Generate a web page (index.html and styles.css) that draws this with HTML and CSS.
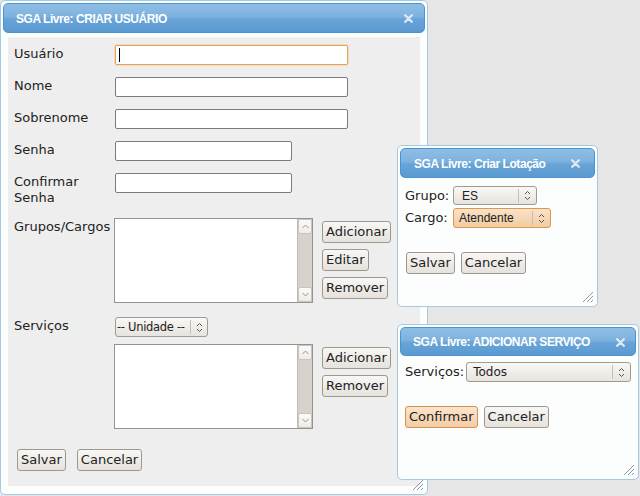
FILE: index.html
```html
<!DOCTYPE html>
<html lang="pt-BR">
<head>
<meta charset="utf-8">
<title>SGA Livre</title>
<link rel="stylesheet" href="styles.css">
</head>
<body>

<div class="dialog dlg-main">
  <div class="titlebar">
    <span class="title">SGA Livre: CRIAR USUÁRIO</span>
    <svg class="close" width="9" height="9" viewBox="0 0 9 9"><path d="M1.2 1.2L7.8 7.8M7.8 1.2L1.2 7.8"/></svg>
  </div>
  <div class="content">
    <div class="form">
      <div class="row"><span class="lbl">Usuário</span><div class="field wide focus"><span class="caret"></span></div></div>
      <div class="row"><span class="lbl">Nome</span><div class="field wide"></div></div>
      <div class="row"><span class="lbl">Sobrenome</span><div class="field wide"></div></div>
      <div class="row"><span class="lbl">Senha</span><div class="field short"></div></div>
      <div class="row"><span class="lbl">Confirmar Senha</span><div class="field short"></div></div>
      <div class="row">
        <span class="lbl">Grupos/Cargos</span>
        <div class="listbox">
          <div class="scrollbar">
            <div class="sb-btn"><svg width="7" height="5" viewBox="0 0 7 5"><path d="M0.5 4L3.5 1L6.5 4"/></svg></div>
            <div class="sb-track"></div>
            <div class="sb-btn"><svg width="7" height="5" viewBox="0 0 7 5"><path d="M0.5 1L3.5 4L6.5 1"/></svg></div>
          </div>
        </div>
        <div class="btncol">
          <button class="btn">Adicionar</button>
          <button class="btn">Editar</button>
          <button class="btn">Remover</button>
        </div>
      </div>
      <div class="row row-serv">
        <span class="lbl">Serviços</span>
        <div class="combo combo-unidade">
          <span class="val">-- Unidade --</span>
          <span class="arr"><svg width="7" height="11" viewBox="0 0 7 11"><path d="M1 4L3.5 1.5L6 4M1 7L3.5 9.5L6 7"/></svg></span>
        </div>
      </div>
      <div class="row row-list2">
        <span class="lbl"></span>
        <div class="listbox">
          <div class="scrollbar">
            <div class="sb-btn"><svg width="7" height="5" viewBox="0 0 7 5"><path d="M0.5 4L3.5 1L6.5 4"/></svg></div>
            <div class="sb-track"></div>
            <div class="sb-btn"><svg width="7" height="5" viewBox="0 0 7 5"><path d="M0.5 1L3.5 4L6.5 1"/></svg></div>
          </div>
        </div>
        <div class="btncol">
          <button class="btn">Adicionar</button>
          <button class="btn">Remover</button>
        </div>
      </div>
      <div class="actions">
        <button class="btn">Salvar</button>
        <button class="btn">Cancelar</button>
      </div>
    </div>
  </div>
  <svg class="grip" width="12" height="12" viewBox="0 0 12 12"><path d="M11 1L1 11M11 5L5 11M11 9L9 11"/></svg>
</div>

<div class="dialog dlg-lot">
  <div class="titlebar">
    <span class="title">SGA Livre: Criar Lotação</span>
    <svg class="close" width="9" height="9" viewBox="0 0 9 9"><path d="M1.2 1.2L7.8 7.8M7.8 1.2L1.2 7.8"/></svg>
  </div>
  <div class="content small">
    <div class="srow"><span class="slbl">Grupo:</span>
      <div class="combo combo-es"><span class="val arial">ES</span><span class="arr"><svg width="7" height="11" viewBox="0 0 7 11"><path d="M1 4L3.5 1.5L6 4M1 7L3.5 9.5L6 7"/></svg></span></div>
    </div>
    <div class="srow"><span class="slbl">Cargo:</span>
      <div class="combo combo-cargo focus"><span class="val arial">Atendente</span><span class="arr"><svg width="7" height="11" viewBox="0 0 7 11"><path d="M1 4L3.5 1.5L6 4M1 7L3.5 9.5L6 7"/></svg></span></div>
    </div>
    <div class="sactions">
      <button class="btn">Salvar</button>
      <button class="btn">Cancelar</button>
    </div>
  </div>
  <svg class="grip" width="12" height="12" viewBox="0 0 12 12"><path d="M11 1L1 11M11 5L5 11M11 9L9 11"/></svg>
</div>

<div class="dialog dlg-serv">
  <div class="titlebar">
    <span class="title">SGA Livre: ADICIONAR SERVIÇO</span>
    <svg class="close" width="9" height="9" viewBox="0 0 9 9"><path d="M1.2 1.2L7.8 7.8M7.8 1.2L1.2 7.8"/></svg>
  </div>
  <div class="content small">
    <div class="srow"><span class="slbl auto">Serviços:</span>
      <div class="combo combo-todos"><span class="val">Todos</span><span class="arr"><svg width="7" height="11" viewBox="0 0 7 11"><path d="M1 4L3.5 1.5L6 4M1 7L3.5 9.5L6 7"/></svg></span></div>
    </div>
    <div class="sactions">
      <button class="btn focus">Confirmar</button>
      <button class="btn">Cancelar</button>
    </div>
  </div>
  <svg class="grip" width="12" height="12" viewBox="0 0 12 12"><path d="M11 1L1 11M11 5L5 11M11 9L9 11"/></svg>
</div>

</body>
</html>
```

FILE: styles.css
```css
* { box-sizing: border-box; }

html, body {
  margin: 0;
  padding: 0;
}

body {
  width: 640px;
  height: 496px;
  position: relative;
  overflow: hidden;
  background: #e6e6e6;
  font-family: "DejaVu Sans", sans-serif;
  font-size: 13px;
  color: #222;
}

/* ---------- dialog windows ---------- */
.dialog {
  position: absolute;
  display: flex;
  flex-direction: column;
  border: 1px solid #a6c9e2;
  border-radius: 5px;
  background: #fcfdfd;
  padding: 2px;
}

.dlg-main { left: 0; top: 0; width: 428px; height: 495px; }
.dlg-lot  { left: 397px; top: 145px; width: 201px; height: 162px; }
.dlg-serv { left: 397px; top: 324px; width: 242px; height: 156px; }

.titlebar {
  flex: none;
  height: 30px;
  display: flex;
  align-items: center;
  justify-content: space-between;
  padding: 1px 11px 0 12px;
  border: 1px solid #4a94cf;
  border-radius: 5px;
  background: linear-gradient(#8fbee5 0%, #7db2de 45%, #67a3d7 55%, #5a9ad0 100%);
  color: #fff;
}

.dlg-lot .titlebar { padding-left: 13px; padding-right: 14px; }
.dlg-serv .titlebar { height: 29px; padding-right: 10px; }

.title {
  font-family: "Liberation Sans", sans-serif;
  font-weight: bold;
  font-size: 12px;
  letter-spacing: -0.45px;
  white-space: nowrap;
}

.close path {
  stroke: #dce9f5;
  stroke-width: 2.3;
  stroke-linecap: round;
  fill: none;
}

.grip {
  position: absolute;
  right: 3px;
  bottom: 3px;
}
.grip path {
  stroke: #8c9aa8;
  stroke-width: 1;
  fill: none;
}

/* ---------- main dialog content ---------- */
.content {
  flex: 1;
  display: flex;
  flex-direction: column;
  padding: 4px 5px 6px 5px;
}

.form {
  flex: 1;
  background: #eeeeee;
  padding: 8px 6px 0 6px;
}

.row {
  display: flex;
  align-items: flex-start;
  margin-top: 12px;
}
.row:first-child { margin-top: 0; }
.row-serv { margin-top: 14px; }
.row-list2 { margin-top: 7px; }

.lbl {
  flex: none;
  width: 101px;
  line-height: 16px;
  padding-top: 1px;
  padding-right: 6px;
}

.field {
  position: relative;
  height: 20px;
  background: #fff;
  border: 1px solid #7e7a75;
  border-radius: 2px;
}
.field.wide  { width: 233px; }
.field.short { width: 177px; }

.field.focus {
  border-color: #e2a257;
  box-shadow: 0 0 0 1px rgba(243, 196, 140, 0.45);
}

.caret {
  position: absolute;
  left: 3px;
  top: 2px;
  width: 1px;
  height: 14px;
  background: #000;
}

.listbox {
  flex: none;
  width: 199px;
  height: 85px;
  margin-left: -1px;
  background: #fff;
  border: 1px solid #98938c;
  display: flex;
  justify-content: flex-end;
}

.scrollbar {
  width: 15px;
  display: flex;
  flex-direction: column;
  background: #d6d1ca;
  border-left: 1px solid #c2bcb4;
}
.sb-btn {
  height: 15px;
  display: flex;
  align-items: center;
  justify-content: center;
  background: linear-gradient(#fbfaf9, #efece8);
  border: 1px solid #c9c4bd;
  border-radius: 2px;
}
.sb-track { flex: 1; }
.sb-btn path {
  stroke: #9a958f;
  stroke-width: 1;
  fill: none;
}

.btncol {
  display: flex;
  flex-direction: column;
  align-items: flex-start;
  gap: 6px;
  margin-left: 9px;
  margin-top: 3px;
}

.btn {
  height: 22px;
  margin: 0;
  padding: 0 3px 1px 3px;
  font-family: "DejaVu Sans", sans-serif;
  font-size: 13px;
  color: #222;
  border: 1px solid #9e978e;
  border-radius: 3px;
  background: linear-gradient(#f8f7f5, #e6e2dc);
  line-height: 18px;
}
.btn.focus {
  border-color: #d9914a;
  background: linear-gradient(#fbe4cc, #f3cda6);
}

.actions {
  display: flex;
  gap: 11px;
  margin-top: 20px;
  margin-left: 3px;
}

/* ---------- combos ---------- */
.combo {
  display: flex;
  align-items: center;
  height: 20px;
  border: 1px solid #a19a91;
  border-radius: 3px;
  background: linear-gradient(#f9f8f6, #e7e3dd);
}
.combo .val {
  flex: 1;
  padding-left: 4px;
  font-size: 12px;
  line-height: 16px;
  white-space: nowrap;
  overflow: hidden;
}
.combo .arr {
  flex: none;
  width: 18px;
  height: 14px;
  border-left: 1px solid #c4beb6;
  display: flex;
  align-items: center;
  justify-content: center;
}
.combo .arr path {
  stroke: #555;
  stroke-width: 1;
  fill: none;
}

.combo-unidade { width: 93px; }
.combo-unidade .val {
  padding-left: 1px;
  font-size: 11.5px;
  letter-spacing: -0.3px;
  overflow: visible;
}
.combo-unidade .arr { width: 17px; }

.combo.focus {
  border-color: #de9750;
  background: linear-gradient(#fae2c9, #f2cba2);
}

.arial {
  font-family: "Liberation Sans", sans-serif;
}

/* ---------- small dialogs ---------- */
.content.small {
  padding: 8px 5px 0 5px;
}
.dlg-serv .content.small { padding-top: 6px; }

.srow {
  display: flex;
  align-items: center;
  margin-bottom: 3px;
}
.slbl {
  flex: none;
  width: 48px;
  line-height: 16px;
}
.slbl.auto { width: auto; margin-right: 2px; }

.combo-es    { width: 84px; height: 19px; }
.combo-es .val { padding-left: 8px; }
.combo-cargo { width: 98px; height: 20px; }
.combo-cargo .val { padding-left: 5px; }
.combo-todos { width: 165px; height: 20px; }
.combo-todos .val { padding-left: 6px; }

.sactions {
  display: flex;
  gap: 6px;
  margin-top: 21px;
  margin-left: 1px;
}
.dlg-serv .sactions { margin-left: 0; }
```
